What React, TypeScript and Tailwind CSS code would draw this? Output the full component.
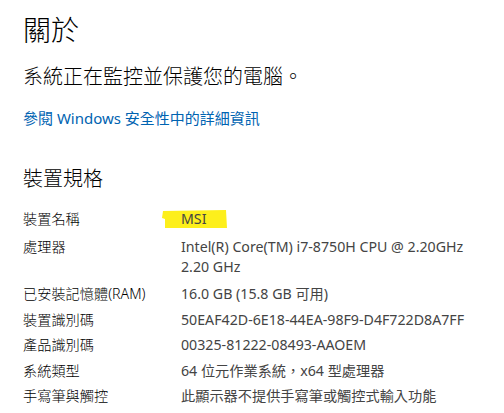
const font = {
  fontFamily: '"Segoe UI", "Noto Sans", "Noto Sans CJK TC", sans-serif',
};

const specs: { label: string; value: string[] }[] = [
  { label: '處理器', value: ['Intel(R) Core(TM) i7-8750H CPU @ 2.20GHz', '2.20 GHz'] },
  { label: '已安裝記憶體(RAM)', value: ['16.0 GB (15.8 GB 可用)'] },
  { label: '裝置識別碼', value: ['50EAF42D-6E18-44EA-98F9-D4F722D8A7FF'] },
  { label: '產品識別碼', value: ['00325-81222-08493-AAOEM'] },
  { label: '系統類型', value: ['64 位元作業系統，x64 型處理器'] },
  { label: '手寫筆與觸控', value: ['此顯示器不提供手寫筆或觸控式輸入功能'] },
];

export default function App() {
  return (
    <div
      className="h-[413px] w-[504px] overflow-hidden bg-white pl-[23px] pt-[12px] text-black"
      style={font}
    >
      <h1 className="text-[28px] font-light leading-[36px]">關於</h1>

      <p className="mt-[15px] text-[20px] font-light leading-[28px]">
        系統正在監控並保護您的電腦。
      </p>

      <a href="#" className="mt-[17px] block text-[15px] leading-[20px] text-[#0063b1]">
        參閱 Windows 安全性中的詳細資訊
      </a>

      <h2 className="mt-[37px] text-[20px] font-light leading-[28px]">裝置規格</h2>

      <div className="mt-[16px] grid grid-cols-[158px_1fr] gap-y-[5.5px] text-[14.2px] leading-[20px]">
        <div className="pb-[2px] font-light">裝置名稱</div>
        <div className="relative pb-[2px]">
          <svg
            className="absolute left-[-20px] top-[1px] h-[18px] w-[66px]"
            viewBox="0 0 66 18"
          >
            <polygon points="2,1 65,0 66,18 4,18 4,9 1,8" fill="#fdef1c" />
          </svg>
          <span className="relative text-[#444]">MSI</span>
        </div>
        {specs.map((s, i) => (
          <div key={s.label} className="contents">
            <div className="font-light">{s.label}</div>
            <div className={i === 0 ? 'pb-[2px] text-[#444]' : 'text-[#444]'}>
              {s.value.map((v) => (
                <div key={v}>{v}</div>
              ))}
            </div>
          </div>
        ))}
      </div>
    </div>
  );
}
